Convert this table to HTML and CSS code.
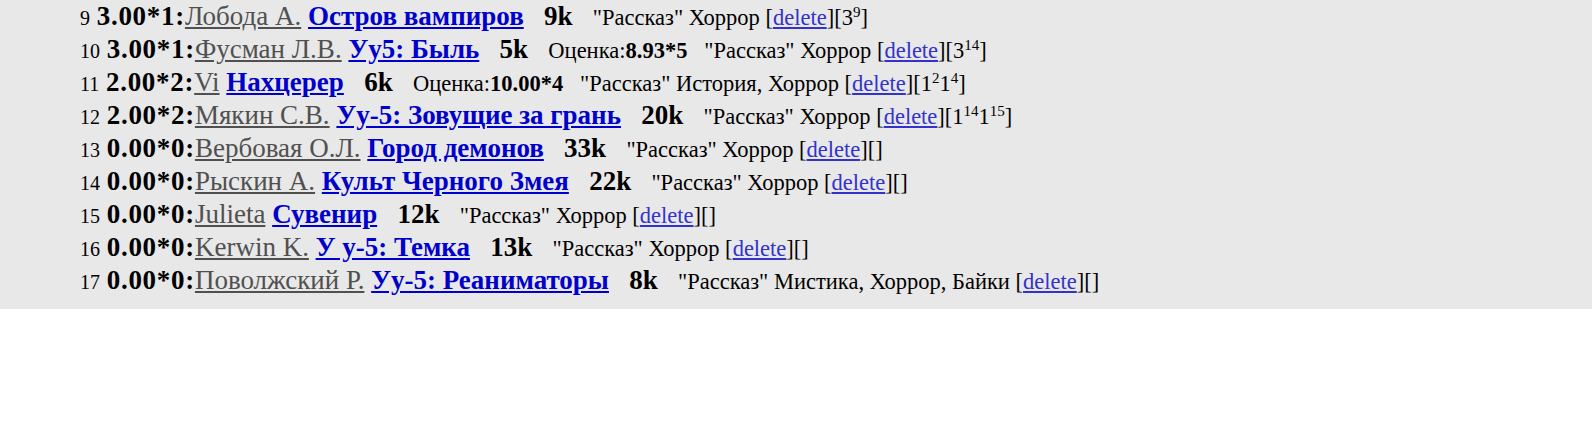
FILE: index.html
```html
<!DOCTYPE html>
<html lang="ru">
<head>
    <meta charset="UTF-8">
    <title>Уу-5</title>
    <link rel="stylesheet" href="styles.css">
</head>
<body>
    <div class="list">
        <div class="row"><span class="num">9</span> <b class="score">3.00*1:</b><a class="author" href="#">Лобода А.</a> <a class="title" href="#">Остров вампиров</a> &nbsp; <b>9k</b> &nbsp; <span class="info">"Рассказ" Хоррор [<a class="del" href="#">delete</a>][3<sup>9</sup>]</span></div>
        <div class="row"><span class="num">10</span> <b class="score">3.00*1:</b><a class="author" href="#">Фусман Л.В.</a> <a class="title" href="#">Уу5: Быль</a> &nbsp; <b>5k</b> &nbsp; <span class="info">Оценка:<b>8.93*5</b> &nbsp; "Рассказ" Хоррор [<a class="del" href="#">delete</a>][3<sup>14</sup>]</span></div>
        <div class="row"><span class="num">11</span> <b class="score">2.00*2:</b><a class="author" href="#">Vi</a> <a class="title" href="#">Нахцерер</a> &nbsp; <b>6k</b> &nbsp; <span class="info">Оценка:<b>10.00*4</b> &nbsp; "Рассказ" История, Хоррор [<a class="del" href="#">delete</a>][1<sup>2</sup>1<sup>4</sup>]</span></div>
        <div class="row"><span class="num">12</span> <b class="score">2.00*2:</b><a class="author" href="#">Мякин С.В.</a> <a class="title" href="#">Уу-5: Зовущие за грань</a> &nbsp; <b>20k</b> &nbsp; <span class="info">"Рассказ" Хоррор [<a class="del" href="#">delete</a>][1<sup>14</sup>1<sup>15</sup>]</span></div>
        <div class="row"><span class="num">13</span> <b class="score">0.00*0:</b><a class="author" href="#">Вербовая О.Л.</a> <a class="title" href="#">Город демонов</a> &nbsp; <b>33k</b> &nbsp; <span class="info">"Рассказ" Хоррор [<a class="del" href="#">delete</a>][]</span></div>
        <div class="row"><span class="num">14</span> <b class="score">0.00*0:</b><a class="author" href="#">Рыскин А.</a> <a class="title" href="#">Культ Черного Змея</a> &nbsp; <b>22k</b> &nbsp; <span class="info">"Рассказ" Хоррор [<a class="del" href="#">delete</a>][]</span></div>
        <div class="row"><span class="num">15</span> <b class="score">0.00*0:</b><a class="author" href="#">Julieta</a> <a class="title" href="#">Сувенир</a> &nbsp; <b>12k</b> &nbsp; <span class="info">"Рассказ" Хоррор [<a class="del" href="#">delete</a>][]</span></div>
        <div class="row"><span class="num">16</span> <b class="score">0.00*0:</b><a class="author" href="#">Kerwin K.</a> <a class="title" href="#">У у-5: Темка</a> &nbsp; <b>13k</b> &nbsp; <span class="info">"Рассказ" Хоррор [<a class="del" href="#">delete</a>][]</span></div>
        <div class="row"><span class="num">17</span> <b class="score">0.00*0:</b><a class="author" href="#">Поволжский Р.</a> <a class="title" href="#">Уу-5: Реаниматоры</a> &nbsp; <b>8k</b> &nbsp; <span class="info">"Рассказ" Мистика, Хоррор, Байки [<a class="del" href="#">delete</a>][]</span></div>
    </div>
</body>
</html>
```

FILE: styles.css
```css
body { margin: 0; font-family: "Liberation Serif", "Times New Roman", serif; color: #000; }
.list { background: #e8e8e8; padding: 0 0 12px 80px; font-size: 27px; }
.row { height: 33px; line-height: 33px; white-space: nowrap; }
.num { font-size: 20px; line-height: 1; }
.score { letter-spacing: 0.7px; }
.author { color: #505050; }
.title { color: #0000cc; font-weight: bold; }
.info { font-size: 22.5px; line-height: 1; }
.del { color: #3333cc; }
sup { font-size: 15px; line-height: 0; }
```
